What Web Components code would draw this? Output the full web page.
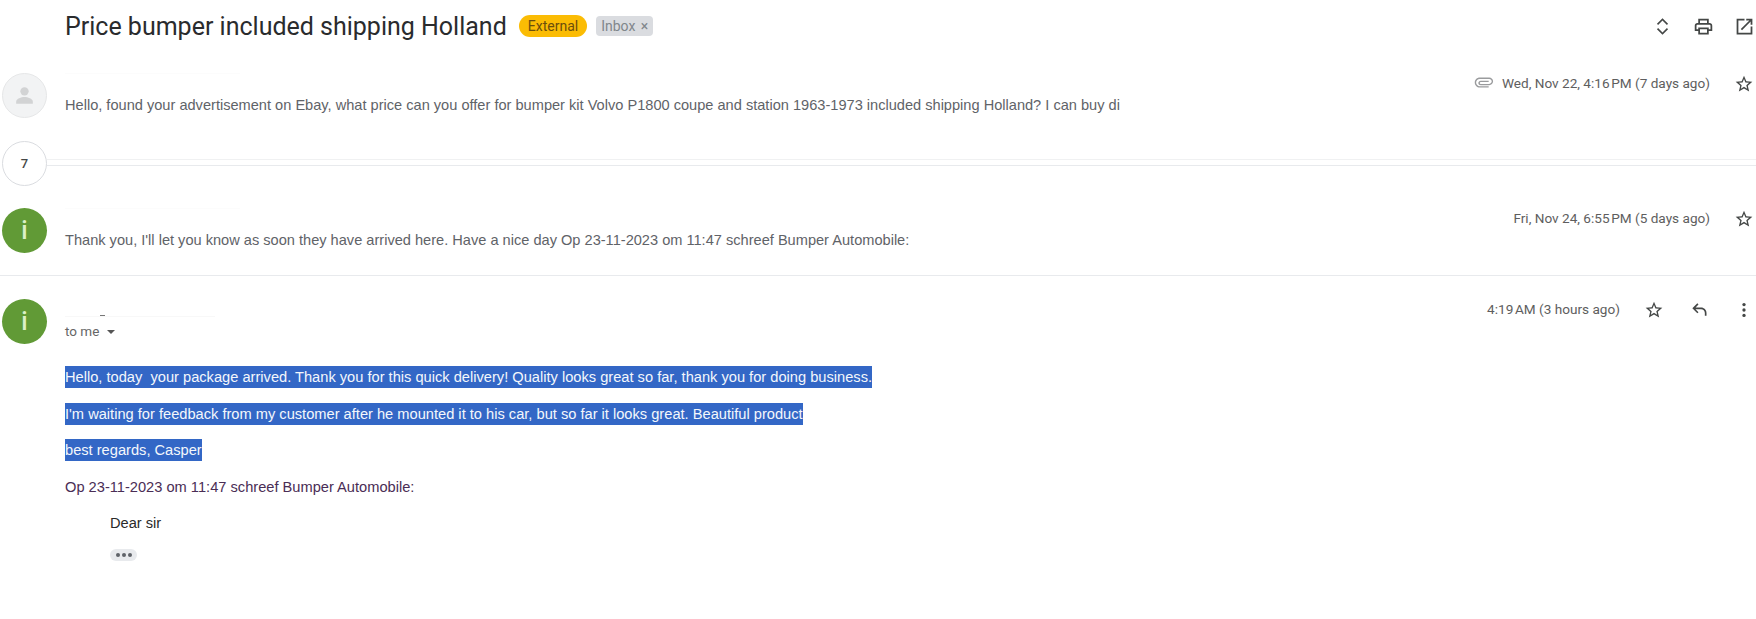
<!DOCTYPE html>
<html>
<head>
<meta charset="utf-8">
<title>Price bumper included shipping Holland</title>
<style>
    html, body { margin: 0; padding: 0; background: #fff; }
    body { font-family: "Liberation Sans", Arial, sans-serif; width: 1756px; height: 619px; overflow: hidden; }
</style>
</head>
<body>
<mail-thread>
    <mail-header subject="Price bumper included shipping Holland"></mail-header>
    <mail-row avatar="person" date="Wed, Nov 22, 4:16&#8239;PM (7 days ago)" clip pad="21" height="89"
        snippet="Hello, found your advertisement on Ebay, what price can you offer for bumper kit Volvo P1800 coupe and station 1963-1973 included shipping Holland? I can buy di"></mail-row>
    <mail-collapsed count="7"></mail-collapsed>
    <mail-row avatar="i" date="Fri, Nov 24, 6:55&#8239;PM (5 days ago)" pad="23" height="91" ruled
        snippet="Thank you, I'll let you know as soon they have arrived here. Have a nice day Op 23-11-2023 om 11:47 schreef Bumper Automobile:"></mail-row>
    <mail-open date="4:19&#8239;AM (3 hours ago)">
        <mail-selected>Hello, today&nbsp; your package arrived. Thank you for this quick delivery! Quality looks great so far, thank you for doing business.</mail-selected>
        <mail-selected>I'm waiting for feedback from my customer after he mounted it to his car, but so far it looks great. Beautiful product</mail-selected>
        <mail-selected>best regards, Casper</mail-selected>
        <mail-quote author="Op 23-11-2023 om 11:47 schreef Bumper Automobile:">Dear sir</mail-quote>
    </mail-open>
</mail-thread>

<script>
const ICONS = {
    unfold: '<path d="M12 5.8l4.6 4.6 1.2-1.2L12 3.400 6.200 9.200l1.200 1.200zM12 18.200l-4.600-4.600-1.200 1.200 5.800 5.800 5.800-5.800-1.200-1.200z"/>',
    print: '<path d="M19 8h-1V3H6v5H5c-1.660 0-3 1.340-3 3v6h4v4h12v-4h4v-6c0-1.660-1.340-3-3-3zM8 5h8v3H8V5zm8 14H8v-4h8v4zm4-4h-2v-2H6v2H4v-4c0-.55.45-1 1-1h14c.55 0 1 .45 1 1v4z"/>',
    open: '<path d="M19 19H5V5h7V3H3v18h18v-9h-2v7zM14 3v2h3.590l-9.830 9.830 1.410 1.410L19 6.410V10h2V3h-7z"/>',
    star: '<path d="M22 9.240l-7.190-.62L12 2 9.190 8.630 2 9.240l5.460 4.730L5.820 21 12 17.270 18.180 21l-1.630-7.030L22 9.240zM12 15.400l-3.760 2.270 1-4.280-3.320-2.880 4.380-.38L12 6.100l1.710 4.040 4.380.38-3.320 2.880 1 4.280L12 15.400z"/>',
    reply: '<path d="M21 19h-2v-3.500c0-2.500-2-4.500-4.500-4.500H7.800l3.600 3.600-1.400 1.400-6-6 6-6 1.400 1.400L7.800 9h6.700c3.600 0 6.500 2.900 6.500 6.500z"/>',
    more: '<circle cx="12" cy="5.500" r="2"/><circle cx="12" cy="12" r="2"/><circle cx="12" cy="18.500" r="2"/>',
    clip: '<path d="M3 11.500C3 8.500 5.400 6 8.500 6h10.300C21.100 6 23 7.900 23 10.200s-1.900 4.300-4.200 4.300H9.500c-1.400 0-2.600-1.100-2.600-2.500s1.200-2.500 2.600-2.500h8.700v1.500H9.500c-.6 0-1 .4-1 1s.4 1 1 1h9.300c1.500 0 2.700-1.300 2.700-2.800s-1.200-2.700-2.700-2.700H8.500c-2.200 0-4 1.800-4 4s1.800 4 4 4h9.700V17H8.500C5.400 17 3 14.500 3 11.500z"/>'
};

class MailIcon extends HTMLElement {
    connectedCallback() {
        const size = this.getAttribute('size') || 24;
        const color = this.getAttribute('color') || '#444746';
        this.attachShadow({mode: 'open'}).innerHTML = `
            <style>
                :host { display: inline-flex; flex: none; width: ${size}px; height: ${size}px; }
                svg { width: 100%; height: 100%; fill: ${color}; }
            </style>
            <svg viewBox="0 0 24 24">${ICONS[this.getAttribute('name')]}</svg>
        `;
    }
}
customElements.define('mail-icon', MailIcon);

class MailAvatar extends HTMLElement {
    connectedCallback() {
        const kind = this.getAttribute('kind');
        let inner = '';
        if (kind === 'person') {
            inner = `<svg viewBox="0 0 24 24" width="25" height="25" fill="#d2d3d4"><circle cx="12" cy="8" r="4"/><path d="M4 20v-2c0-3 5-4.500 8-4.500s8 1.500 8 4.500v2z"/></svg>`;
        } else if (kind === 'i') {
            inner = `<span class="letter">i</span>`;
        } else {
            inner = `<span class="count">${kind}</span>`;
        }
        this.attachShadow({mode: 'open'}).innerHTML = `
            <style>
                :host {
                    display: flex;
                    align-items: center;
                    justify-content: center;
                    width: 45px;
                    height: 45px;
                    box-sizing: border-box;
                    border-radius: 50%;
                    background: #fff;
                    flex: none;
                }
                :host([kind="person"]) { background: #f2f3f4; border: 1px solid #e6e7e8; }
                :host([kind="i"]) { background: #619a36; }
                :host([kind="7"]) { border: 1px solid #dadce0; }
                .letter { color: #dcf0c8; font: 500 25px/45px "Roboto", sans-serif; }
                .count { color: #444746; font: 500 13px "Roboto", sans-serif; }
            </style>
            ${inner}
        `;
    }
}
customElements.define('mail-avatar', MailAvatar);

class MailHeader extends HTMLElement {
    connectedCallback() {
        this.attachShadow({mode: 'open'}).innerHTML = `
            <style>
                :host {
                    display: flex;
                    align-items: center;
                    height: 52px;
                    padding-left: 65px;
                    padding-right: 1px;
                    box-sizing: border-box;
                }
                h1 {
                    margin: 0;
                    font: 400 25px "Roboto", sans-serif;
                    color: #2a2b2d;
                }
                .external {
                    margin-left: 12px;
                    height: 22px;
                    padding: 0 9px;
                    border-radius: 11px;
                    background: #fbbc04;
                    color: #6b4e0c;
                    font: 14px/22px "Roboto", sans-serif;
                }
                .inbox {
                    margin-left: 9px;
                    height: 20px;
                    padding: 0 5px;
                    border-radius: 4px;
                    background: #dadce0;
                    color: #80868b;
                    font: 14px/20px "Roboto", sans-serif;
                }
                .inbox span { margin-left: 2px; }
                .tools { margin-left: auto; display: flex; align-items: center; gap: 20px; }
                .unfold { margin: 0 -1px; }
            </style>
            <h1>${this.getAttribute('subject')}</h1>
            <span class="external">External</span>
            <span class="inbox">Inbox <span>×</span></span>
            <div class="tools">
                <mail-icon class="unfold" name="unfold" size="23"></mail-icon>
                <mail-icon name="print" size="21"></mail-icon>
                <mail-icon name="open" size="21"></mail-icon>
            </div>
        `;
    }
}
customElements.define('mail-header', MailHeader);

class MailRow extends HTMLElement {
    connectedCallback() {
        const clip = this.hasAttribute('clip') ? '<mail-icon class="clip" name="clip" size="22" color="#9a9b9d"></mail-icon>' : '';
        this.attachShadow({mode: 'open'}).innerHTML = `
            <style>
                :host {
                    display: block;
                    box-sizing: border-box;
                    height: ${this.getAttribute('height')}px;
                    padding: ${this.getAttribute('pad')}px 2px 0 2px;
                }
                :host([ruled]) { border-bottom: 1px solid #e8eaed; }
                .row { display: flex; align-items: flex-start; }
                .main { flex: 1; margin-left: 18px; min-width: 0; }
                .trace { width: 175px; height: 1px; margin-bottom: 22px; background: #fcfcfc; }
                .snippet { color: #5f6368; font-size: 14.6px; line-height: 18px; white-space: nowrap; }
                .side { display: flex; align-items: center; margin-top: 1px; }
                .date { color: #5e5e5e; font: 13.6px/20px "Roboto", sans-serif; margin: -2px 24px 0 0; }
                .clip { margin: -3px 8px 0 0; }
            </style>
            <div class="row">
                <mail-avatar kind="${this.getAttribute('avatar')}"></mail-avatar>
                <div class="main">
                    <div class="trace"></div>
                    <div class="snippet">${this.getAttribute('snippet')}</div>
                </div>
                <div class="side">
                    ${clip}
                    <span class="date">${this.getAttribute('date')}</span>
                    <mail-icon name="star" size="20"></mail-icon>
                </div>
            </div>
        `;
    }
}
customElements.define('mail-row', MailRow);

class MailCollapsed extends HTMLElement {
    connectedCallback() {
        this.attachShadow({mode: 'open'}).innerHTML = `
            <style>
                :host { display: flex; align-items: flex-start; height: 44px; padding-left: 2px; }
                .lines {
                    flex: 1;
                    height: 5px;
                    margin-top: 18px;
                    border-top: 1px solid #f0f1f2;
                    border-bottom: 1px solid #e8eaed;
                }
            </style>
            <mail-avatar kind="${this.getAttribute('count')}"></mail-avatar>
            <div class="lines"></div>
        `;
    }
}
customElements.define('mail-collapsed', MailCollapsed);

class MailOpen extends HTMLElement {
    connectedCallback() {
        this.attachShadow({mode: 'open'}).innerHTML = `
            <style>
                :host { display: block; padding: 23px 2px 0 2px; }
                .top { display: flex; align-items: flex-start; }
                .who { flex: 1; margin-left: 18px; padding-top: 17px; color: #666; font: 13.5px/18px "Roboto", sans-serif; }
                .trace { position: relative; width: 150px; height: 1px; margin-bottom: 5px; background: #f8f8f8; }
                .trace::after { content: ""; position: absolute; left: 35px; top: -1px; width: 5px; height: 1px; background: #777; }
                .arrow {
                    display: inline-block;
                    margin-left: 8px;
                    vertical-align: middle;
                    border: 4px solid transparent;
                    border-top: 4px solid #555;
                    border-bottom: 0;
                }
                .side { display: flex; align-items: center; margin-top: 1px; }
                .date { color: #5e5e5e; font: 13.6px/20px "Roboto", sans-serif; margin-top: -2px; }
                mail-icon { margin-left: 25px; }
                mail-icon:first-of-type { margin-left: 24px; }
                .body { padding: 22px 0 0 63px; }
            </style>
            <div class="top">
                <mail-avatar kind="i"></mail-avatar>
                <div class="who"><div class="trace"></div>to me<span class="arrow"></span></div>
                <div class="side">
                    <span class="date">${this.getAttribute('date')}</span>
                    <mail-icon name="star" size="20"></mail-icon>
                    <mail-icon name="reply" size="20"></mail-icon>
                    <mail-icon name="more" size="20"></mail-icon>
                </div>
            </div>
            <div class="body"><slot></slot></div>
        `;
    }
}
customElements.define('mail-open', MailOpen);

class MailSelected extends HTMLElement {
    constructor() {
        super();
        this.attachShadow({mode: 'open'}).innerHTML = `
            <style>
                :host { display: block; height: 36.5px; }
                span {
                    display: inline-block;
                    height: 22px;
                    background: #3367c6;
                    color: #f4f7fc;
                    font-size: 14.65px;
                    line-height: 22px;
                    white-space: nowrap;
                }
            </style>
            <span><slot></slot></span>
        `;
    }
}
customElements.define('mail-selected', MailSelected);

class MailQuote extends HTMLElement {
    connectedCallback() {
        this.attachShadow({mode: 'open'}).innerHTML = `
            <style>
                :host { display: block; font-size: 14.65px; padding-top: 1px; }
                .author { color: #4a2d55; line-height: 20px; }
                blockquote { margin: 16px 0 0 45px; color: #2a2a2a; line-height: 20px; }
                .dots {
                    display: flex;
                    align-items: center;
                    justify-content: center;
                    gap: 2px;
                    width: 27px;
                    height: 12px;
                    margin: 16px 0 0 45px;
                    border-radius: 6px;
                    background: #e8eaed;
                }
                .dots i { width: 4px; height: 4px; border-radius: 50%; background: #5f6368; }
            </style>
            <div class="author">${this.getAttribute('author')}</div>
            <blockquote><slot></slot></blockquote>
            <div class="dots"><i></i><i></i><i></i></div>
        `;
    }
}
customElements.define('mail-quote', MailQuote);

class MailThread extends HTMLElement {
    constructor() {
        super();
        this.attachShadow({mode: 'open'}).innerHTML = `
            <style>
                :host { display: block; }
            </style>
            <slot></slot>
        `;
    }
}
customElements.define('mail-thread', MailThread);
</script>
</body>
</html>
